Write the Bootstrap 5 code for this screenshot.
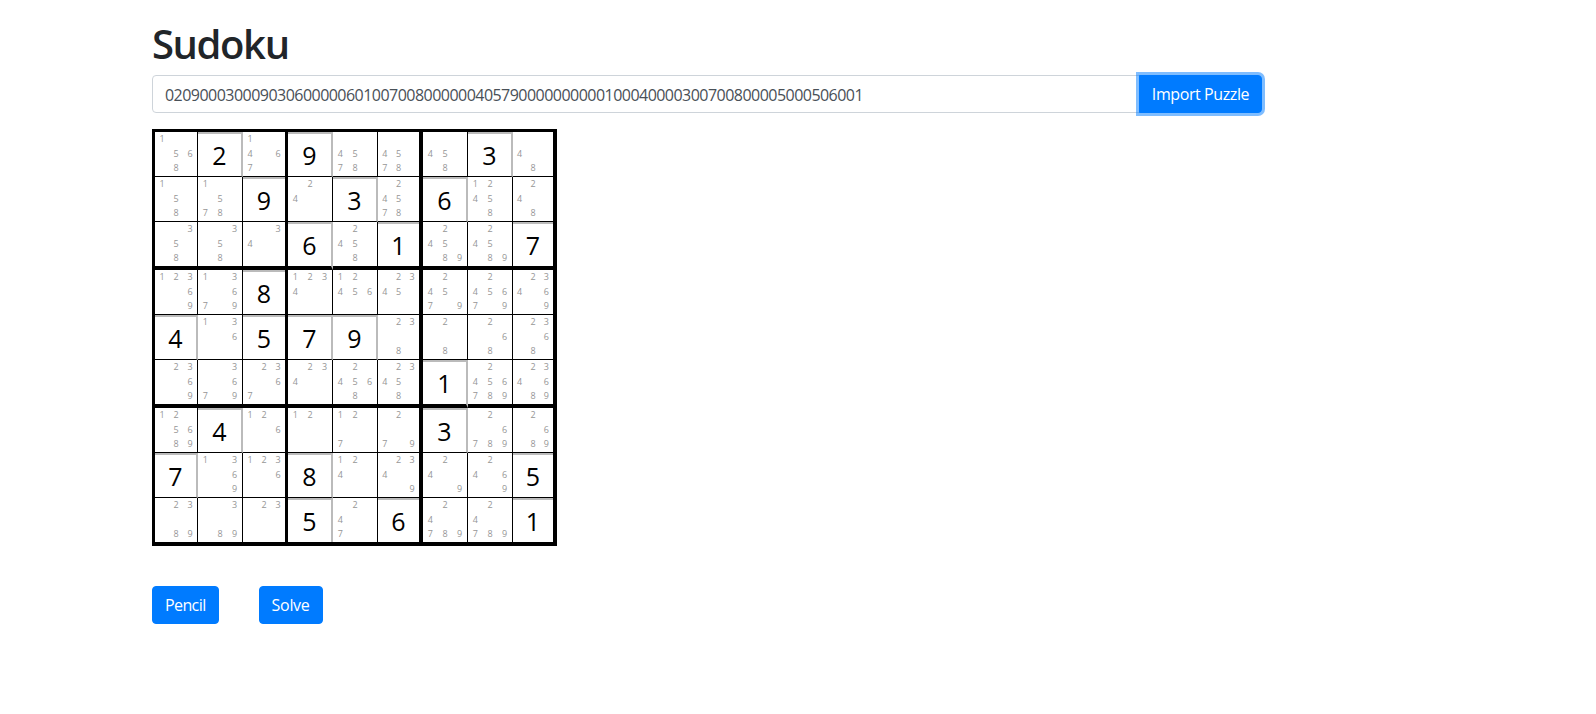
<!DOCTYPE html>
<html lang="en">
<head>
<meta charset="utf-8">
<title>Sudoku</title>
<link href="https://cdn.jsdelivr.net/npm/bootstrap@5.3.0/dist/css/bootstrap.min.css" rel="stylesheet">
<style>
body { font-family: "Open Sans", "Noto Sans", sans-serif; background: #fff; color: #212529; }
.page-wrap { margin-left: 152px; width: 1110px; padding-top: 20px; }
.page-title { font-size: 40px; font-weight: 600; line-height: 48px; margin: 0 0 7px; letter-spacing: -1.4px; }
.puzzle-input.form-control { color: #495057; border-color: #ced4da; border-radius: 4px 0 0 4px; height: 38px; font-size: 16px; letter-spacing: -.53px; padding-top: 7px; padding-bottom: 5px; }
.blue-btn.btn { --bs-btn-bg: #007bff; --bs-btn-border-color: #007bff; --bs-btn-hover-bg: #007bff; --bs-btn-color: #fff; border-radius: 4px; height: 38px; font-size: 16px; letter-spacing: -.6px; padding: 6px 12px; white-space: nowrap; }
.import-btn.btn { width: 123px; border-radius: 0 4px 4px 0 !important; box-shadow: 0 0 0 3px rgba(0,123,255,.5); z-index: 3; padding: 6px 0; letter-spacing: -.4px; }
.solve-btn.btn { letter-spacing: -.3px; }
.sudoku-board { display: grid; width: max-content; margin-top: 16px; border: 3px solid #000; border-right-width: 4px; border-bottom-width: 4px; background: #fff;
  grid-template-columns: 43px 45px 45px 45px 45px 45px 45px 45px 40px;
  grid-template-rows: 45px 45px 48px 45px 45px 48px 45px 45px 44px; }
.sq { border-right: 1px solid #000; border-bottom: 1px solid #000; display: grid; grid-template-columns: repeat(3, 1fr); grid-template-rows: repeat(3, 14.5px); align-content: start; min-width: 0; overflow: hidden; }
.sq.box-r { border-right-width: 3px; }
.sq.box-r2 { border-right-width: 4px; }
.sq.box-b { border-bottom-width: 4px; }
.sq.last-c { border-right: 0; }
.sq.last-r { border-bottom: 0; }
.pm { font-size: 9px; line-height: 14.5px; text-align: center; color: #969696; }
.sq.given { display: flex; align-items: center; justify-content: center; font-size: 25px; font-weight: 400; line-height: 1; color: #000; box-shadow: inset 0 2px 0 #bbb; padding-top: 3px; }
.sq.given:not(.box-r):not(.box-r2):not(.last-c) { border-right: 2px solid #bbb; }
.d1,.d2,.d3 { grid-row: 1; } .d4,.d5,.d6 { grid-row: 2; } .d7,.d8,.d9 { grid-row: 3; }
.d1,.d4,.d7 { grid-column: 1; } .d2,.d5,.d8 { grid-column: 2; } .d3,.d6,.d9 { grid-column: 3; }
.action-row { margin-top: 40px; gap: 40px; }
</style>
</head>
<body>
<div class="page-wrap">
  <h1 class="page-title">Sudoku</h1>
  <div class="input-group">
    <input type="text" class="form-control puzzle-input" value="020900030009030600000601007008000000405790000000000100040000300700800005000506001" aria-label="Puzzle">
    <button class="btn btn-primary blue-btn import-btn" type="button">Import Puzzle</button>
  </div>
  <div class="sudoku-board" id="board"></div>
  <div class="d-flex action-row">
    <button class="btn btn-primary blue-btn" type="button">Pencil</button>
    <button class="btn btn-primary blue-btn solve-btn" type="button">Solve</button>
  </div>
</div>
<script>
var data = [
 "1568","=2","1467","=9","4578","4578","458","=3","48",
 "158","1578","=9","24","=3","24578","=6","12458","248",
 "358","358","34","=6","2458","=1","24589","24589","=7",
 "12369","13679","=8","1234","12456","2345","24579","245679","23469",
 "=4","136","=5","=7","=9","238","28","268","2368",
 "2369","3679","2367","234","24568","23458","=1","2456789","234689",
 "125689","=4","126","12","127","279","=3","26789","2689",
 "=7","1369","1236","=8","124","2349","249","2469","=5",
 "2389","389","23","=5","247","=6","24789","24789","=1"
];
var b = document.getElementById('board');
data.forEach(function (v, i) {
  var c = i % 9, r = Math.floor(i / 9), s = document.createElement('div');
  s.className = 'sq';
  if (c === 8) s.classList.add('last-c');
  else if (c === 5) s.classList.add('box-r2');
  else if (c === 2) s.classList.add('box-r');
  if (r === 8) s.classList.add('last-r'); else if (r % 3 === 2) s.classList.add('box-b');
  if (v[0] === '=') { s.classList.add('given'); s.textContent = v[1]; }
  else v.split('').forEach(function (d) {
    var m = document.createElement('span');
    m.className = 'pm d' + d; m.textContent = d; s.appendChild(m);
  });
  b.appendChild(s);
});
</script>
</body>
</html>
